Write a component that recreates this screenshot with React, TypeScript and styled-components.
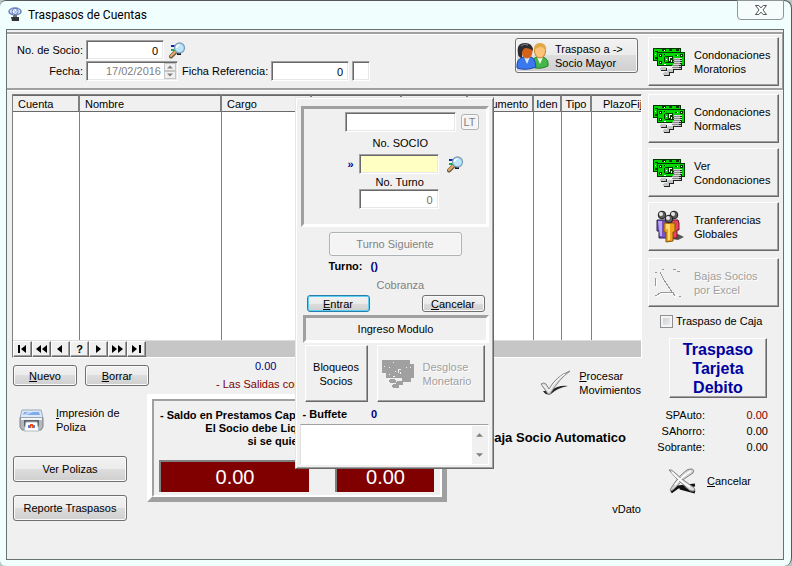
import React from "react";
import styled, { createGlobalStyle, css } from "styled-components";

const Global = createGlobalStyle`
  *, *::before, *::after { box-sizing: border-box; }
  body { margin: 0; background: #b9c4c6; }
  body, button, input, textarea { font: 11px/14px "Liberation Sans", Arial, sans-serif; color: #000; }
  button, input, textarea { margin: 0; padding: 0; border-radius: 0; outline: none; }
  p { margin: 0; }
  svg { display: block; flex: none; }
`;

const raised = css`
  border: 1px solid;
  border-color: #fff #696969 #696969 #fff;
  box-shadow: inset -1px -1px 0 #a0a0a0;
`;
const sunken = css`
  border: 1px solid;
  border-color: #a0a0a0 #fff #fff #a0a0a0;
  box-shadow: inset 1px 1px 0 #696969, inset -1px -1px 0 #e8e8e8;
`;

const Window = styled.main`
  position: relative;
  display: flex;
  flex-direction: column;
  min-height: 100vh;
  padding: 0 7px 6px 6px;
  background: #f1fefe;
  border-top: 1px solid #55595a;
  border-right: 1px solid #55595a;
  border-radius: 6px 8px 8px 6px;
`;
const TitleBar = styled.header`
  display: flex;
  align-items: flex-start;
  height: 28px;
  padding: 5px 0 0 2px;
  gap: 6px;
`;
const Title = styled.h1`
  flex: 1;
  margin: 0;
  font: 12px/18px Roboto, "Segoe UI", sans-serif;
`;
const CloseButton = styled.button`
  display: grid;
  place-items: center;
  width: 47px;
  height: 20px;
  margin-top: -6px;
  border: 1px solid #8d9696;
  border-radius: 0 0 4px 4px;
  background: #f6fbfb;
`;
const Client = styled.div`
  flex: 1;
  padding-top: 2px;
  border: 1px solid #68716f;
  background: #f0f0f0;
`;
const Band = styled.section`
  display: flex;
  align-items: flex-start;
  gap: 10px;
  padding: 3px 3px 2px 0;
  border-top: 2px solid #a0a0a0;
  border-bottom: 2px solid #a0a0a0;
  border-right: 1px solid #a0a0a0;
  box-shadow: inset 0 1px 0 #fff, 0 1px 0 #fff;
`;
const Fields = styled.div`
  flex: 1;
  display: grid;
  gap: 1px;
  padding-top: 3px;
`;
const FieldRow = styled.div`
  display: flex;
  align-items: center;
  gap: 3px;
`;
const Label = styled.label<{ $width?: number; $indent?: number }>`
  width: ${(p) => (p.$width ? `${p.$width}px` : "auto")};
  margin-left: ${(p) => p.$indent ?? 0}px;
  text-align: right;
  white-space: nowrap;
`;
const TextInput = styled.input<{ $width: number; $tone?: string; $bg?: string }>`
  ${sunken}
  width: ${(p) => p.$width}px;
  height: 20px;
  padding: 1px 5px 0;
  text-align: right;
  color: ${(p) => p.$tone ?? "#000"};
  background: ${(p) => p.$bg ?? "#fff"};
`;
const DateBox = styled.div`
  ${sunken}
  display: flex;
  align-items: center;
  width: 92px;
  height: 20px;
  padding: 2px 1px;
  background: #fff;
`;
const DateInput = styled.input`
  flex: 1;
  min-width: 0;
  padding-right: 3px;
  border: 0;
  text-align: right;
  color: #808080;
  background: transparent;
`;
const Spinner = styled.div`
  display: grid;
  width: 12px;
`;
const SpinButton = styled.button`
  display: grid;
  place-items: center;
  height: 8px;
  border: 1px solid #c4c4c4;
  background: #f0f0f0;
`;
const IconButton = styled.button`
  display: flex;
  align-items: center;
  border: 0;
  background: none;
  text-align: left;
`;
const SearchButton = styled(IconButton)<{ $indent?: number }>`
  margin-left: ${(p) => p.$indent ?? 2}px;
`;
const AeroButton = styled.button<{ $width?: number; $height: number; $focus?: boolean }>`
  display: flex;
  align-items: center;
  justify-content: center;
  width: ${(p) => (p.$width ? `${p.$width}px` : "100%")};
  height: ${(p) => p.$height}px;
  border: 1px solid ${(p) => (p.$focus ? "#2c7ca8" : "#707070")};
  border-radius: 3px;
  box-shadow: inset 0 0 0 1px ${(p) => (p.$focus ? "#5cd0f4" : "#fafafa")};
  background: linear-gradient(#f2f2f2, #ebebeb 50%, #dddddd 50%, #cfcfcf);
  &:disabled {
    color: #838383;
    border-color: #adb2b5;
    background: #f4f4f4;
  }
`;
const MajorButton = styled(AeroButton)`
  justify-content: flex-start;
  gap: 6px;
  margin-top: 1px;
  text-align: left;
`;
const BevelButton = styled.button<{ $width?: number; $height: number; $center?: boolean; $pad?: number }>`
  ${raised}
  display: flex;
  flex: none;
  align-items: center;
  justify-content: ${(p) => (p.$center ? "center" : "flex-start")};
  gap: 9px;
  width: ${(p) => p.$width ?? 131}px;
  height: ${(p) => p.$height}px;
  padding: 0 ${(p) => p.$pad ?? 4}px;
  text-align: ${(p) => (p.$center ? "center" : "left")};
  background: #f0f0f0;
  &:disabled { color: #a0a0a0; text-shadow: 1px 1px 0 #fff; }
`;
const Body = styled.div`
  display: flex;
  gap: 6px;
  padding: 4px 4px 0 5px;
`;
const MainColumn = styled.div`
  flex: 1;
  min-width: 0;
`;
const Side = styled.aside`
  display: flex;
  flex-direction: column;
  flex: none;
  gap: 5px;
  width: 131px;
`;
const Browse = styled.section`
  border: 1px solid;
  border-color: #808080 #fff #fff #808080;
  background: #c6c6c6;
`;
const Table = styled.table`
  width: 100%;
  table-layout: fixed;
  border-collapse: separate;
  border-spacing: 0;
  background: #fff;
`;
const Column = styled.col<{ $width?: number }>`
  width: ${(p) => (p.$width ? `${p.$width}px` : "auto")};
`;
const HeadCell = styled.th<{ $center?: boolean; $last?: boolean }>`
  height: 17px;
  padding: 0 0 0 ${(p) => (p.$last ? 11 : p.$center ? 0 : 5)}px;
  overflow: hidden;
  white-space: nowrap;
  font-weight: normal;
  text-align: ${(p) => (p.$center ? "center" : "left")};
  background: #f0f0f0;
  border: 1px solid;
  border-width: 1px ${(p) => (p.$last ? 0 : 2)}px 1px 0;
  border-color: #696969 #808080 #696969 #fff;
`;
const Cell = styled.td<{ $last?: boolean }>`
  height: 228px;
  padding: 0;
  border-right: ${(p) => (p.$last ? 0 : 1)}px solid #808080;
`;
const Navigator = styled.nav`
  display: flex;
  height: 17px;
  border-top: 1px solid #dcdcdc;
`;
const NavButton = styled.button`
  ${raised}
  display: grid;
  place-items: center;
  width: 19px;
  height: 16px;
  background: #f0f0f0;
  font-weight: bold;
  line-height: 12px;
`;
const Lower = styled.div`
  display: flex;
  justify-content: space-between;
`;
const LowerLeft = styled.div`
  flex: 1;
  min-width: 0;
`;
const ActionRow = styled.div`
  display: flex;
  height: 36px;
  padding: 7px 0 0 1px;
  gap: 8px;
`;
const Notes = styled.div`
  padding-left: 59px;
  margin-top: -8px;
  line-height: 18px;
  white-space: nowrap;
  color: #800000;
`;
const Amount = styled.output<{ $color?: string; $indent?: number }>`
  display: block;
  padding-left: ${(p) => p.$indent ?? 0}px;
  color: ${(p) => p.$color ?? "#000"};
`;
const SummaryRow = styled.div`
  display: flex;
  gap: 20px;
`;
const Reports = styled.div`
  display: grid;
  align-content: start;
  gap: 13px;
  width: 115px;
  padding: 12px 0 0 1px;
`;
const PrintButton = styled(IconButton)`
  gap: 12px;
  height: 28px;
  margin-bottom: 9px;
  padding-left: 6px;
  white-space: nowrap;
`;
const Balance = styled.section`
  width: 300px;
  height: 108px;
  border: 5px solid;
  border-color: #fff #a0a0a0 #a0a0a0 #fff;
`;
const BalanceInner = styled.div`
  height: 100%;
  padding: 8px 5px 0 5px;
  border: 2px solid;
  border-color: #a0a0a0 #fff #fff #a0a0a0;
  text-align: center;
  font-weight: bold;
  line-height: 13px;
  white-space: nowrap;
`;
const Totals = styled.div`
  display: flex;
  justify-content: space-between;
  padding: 12px 1px 0 0;
`;
const Total = styled.output<{ $width: number }>`
  width: ${(p) => p.$width}px;
  height: 32px;
  border-top: 2px solid #808080;
  border-left: 2px solid #808080;
  background: #800000;
  color: #fff;
  font-size: 20px;
  font-weight: normal;
  line-height: 30px;
`;
const LowerRight = styled.div`
  display: flex;
  flex-direction: column;
  flex: none;
  align-items: flex-end;
  width: 160px;
  padding: 10px 1px 0 0;
`;
const ProcessButton = styled(IconButton)`
  gap: 8px;
  height: 30px;
`;
const AutoTitle = styled.h2`
  margin: 32px 15px 0 0;
  font-size: 13px;
  line-height: 16px;
  white-space: nowrap;
`;
const DataNote = styled.p`
  margin-top: 56px;
`;
const Check = styled.label`
  display: flex;
  align-items: center;
  gap: 3px;
  padding: 2px 0 0 12px;
  white-space: nowrap;
`;
const CheckInput = styled.input`
  appearance: none;
  width: 13px;
  height: 13px;
  border: 1px solid #8e8f8f;
  box-shadow: inset 0 0 0 2px #f4f4f4;
  background: linear-gradient(135deg, #c4cad2, #f2f2f2);
`;
const SideGap = styled.div<{ $top: number; $left?: number }>`
  padding: ${(p) => p.$top}px 0 0 ${(p) => p.$left ?? 0}px;
`;
const DebitButton = styled(BevelButton)`
  color: #0000a0;
  font-size: 16px;
  font-weight: bold;
  line-height: 19px;
`;
const Sums = styled.dl`
  display: grid;
  grid-template-columns: 57px 1fr;
  margin: 4px 11px 0 0;
  line-height: 16px;
  text-align: right;
  white-space: nowrap;
`;
const SumValue = styled.dd<{ $color?: string }>`
  margin: 0;
  color: ${(p) => p.$color ?? "#000"};
`;
const CancelButton = styled(IconButton)`
  gap: 10px;
  margin: 8px 0 0 20px;
`;

const Dialog = styled.section`
  position: absolute;
  top: 96px;
  left: calc(50% - 101px);
  width: 199px;
  padding: 8px 4px 3px 4px;
  border: 1px solid;
  border-color: #e6e6e6 #696969 #696969 #e6e6e6;
  box-shadow: inset 1px 1px 0 #fff, inset -1px -1px 0 #a0a0a0;
  background: #f0f0f0;
`;
const Group = styled.div`
  display: grid;
  grid-template-rows: 20px 22px 20px 15px 20px;
  align-content: start;
  align-items: center;
  height: 121px;
  margin-left: 1px;
  padding: 3px 6px 0 0;
  border: 3px solid;
  border-color: #a0a0a0 #fff #fff #a0a0a0;
`;
const GroupRow = styled.div<{ $indent: number; $gap?: number }>`
  display: flex;
  align-items: center;
  gap: ${(p) => p.$gap ?? 0}px;
  padding-left: ${(p) => p.$indent}px;
`;
const Marker = styled.span`
  width: 8px;
  color: #0000a0;
  font-weight: bold;
`;
const DialogButtons = styled.div`
  display: flex;
  justify-content: space-between;
  padding: 3px 4px 0 7px;
`;
const TurnArea = styled.div`
  display: grid;
  padding: 5px 0 0 29px;
`;
const TurnLine = styled.p`
  display: flex;
  gap: 8px;
  margin-top: 3px;
  font-weight: bold;
`;
const Blue = styled.span`
  color: #000080;
`;
const Muted = styled.p`
  margin-top: 5px;
  padding-left: 48px;
  color: #808080;
`;
const ModuleTitle = styled.h2`
  height: 28px;
  margin: 3px 0 2px 3px;
  border: 3px solid;
  border-color: #a0a0a0 #fff #fff #a0a0a0;
  text-align: center;
  font-size: 11px;
  font-weight: normal;
  line-height: 22px;
`;
const ModuleButtons = styled.div`
  display: flex;
  justify-content: space-between;
  padding: 0 4px 0 5px;
`;
const Buffet = styled.p`
  display: flex;
  gap: 24px;
  padding: 5px 0 3px 3px;
  font-weight: bold;
`;
const MemoBox = styled.div`
  display: flex;
  height: 41px;
  border: 1px solid;
  border-color: #a0a0a0 #fff #fff #e0e0e0;
  background: #fff;
`;
const Memo = styled.textarea`
  flex: 1;
  min-width: 0;
  border: 0;
  resize: none;
  overflow: hidden;
`;
const ScrollTrack = styled.div`
  display: flex;
  flex-direction: column;
  justify-content: space-between;
  width: 16px;
  margin-top: 1px;
  background: #f0f0f0;
`;
const ScrollButton = styled.button`
  display: grid;
  place-items: center;
  height: 18px;
  border: 0;
  background: none;
`;

const Arrow = ({ up, size = 7, color = "#808080" }: { up?: boolean; size?: number; color?: string }) => (
  <svg width={size} height="4" viewBox="0 0 8 4" aria-hidden="true">
    <path d={up ? "M0 4 4 0l4 4z" : "M0 0h8L4 4z"} fill={color} />
  </svg>
);

const AppIcon = () => (
  <svg width="14" height="16" viewBox="0 0 14 16" aria-hidden="true">
    <ellipse cx="7" cy="5.500" rx="6" ry="3.500" fill="#dbe6fa" stroke="#6580bd" strokeWidth="1.500" />
    <circle cx="7" cy="5.500" r="3" fill="#fff" stroke="#5672b8" />
    <path d="M4 2 10 9M11 2 5 9" stroke="#91a8dc" />
    <path d="M3 11h8v4H4z" fill="#303438" />
    <path d="M5 9h4v2H5z" fill="#71777d" />
  </svg>
);

const CloseIcon = () => (
  <svg width="12" height="10" viewBox="0 0 12 10" aria-hidden="true">
    <path d="M.5.5h3.300L6 2.900 8.200.5h3.300L8 5l3.500 4.500H8.200L6 7.100 3.800 9.500H.5L4 5z" fill="#fff" stroke="#4d5359" />
  </svg>
);

const SearchIcon = () => (
  <svg width="17" height="17" viewBox="0 0 17 17" aria-hidden="true">
    <path d="M2 3h4v2H2z" fill="#0828c0" />
    <path d="M2 7h4v2H2z" fill="#16ad48" />
    <path d="M8 11h4v2H8z" fill="#151515" />
    <path d="m2 14.500 4-4" stroke="#6c5840" strokeWidth="4" strokeLinecap="round" />
    <path d="m2 14 4-4" stroke="#dfa868" strokeWidth="2.400" strokeLinecap="round" />
    <circle cx="10.500" cy="6" r="5" fill="#bce5fa" stroke="#7d9fb8" strokeWidth="1.300" />
    <path d="M7.500 6q0-3 3-3" fill="none" stroke="#fff" strokeWidth="1.600" />
  </svg>
);

const MoneyIcon = ({ off }: { off?: boolean }) => {
  const green = off ? "#a0a0a0" : "#00d800";
  const dark = off ? "#a0a0a0" : "#003800";
  const coin = off ? "#a0a0a0" : "#c4c4c4";
  const pale = off ? "#f0f0f0" : "#fff";
  return (
    <svg width="32" height="28" viewBox="0 0 32 28" shapeRendering="crispEdges" aria-hidden="true">
      <path d="M0 0h28v13H0z" fill={dark} />
      <path d="M1 1h26v11H1z" fill={green} />
      <path d="M2 3h3v1H2zM2 9h2v2H2zM9 1h4v2H9zM16 1h3v2h-3zM23 1h3v2h-3z" fill={dark} />
      <path d="M2 6h1v1H2zM11 2h1v1h-1z" fill={pale} />
      <path d="M4 4h28v14H4z" fill={dark} />
      <path d="M5 5h26v12H5z" fill={green} />
      <path d="M6 6h3v3H6zM6 13h3v3H6zM27 6h3v3h-3zM11 6h1v1h-1zM12 8h3v1h-3zM11 9h1v5h-1zM12 14h3v1h-3zM15 8h5v7h-5zM22 7h2v1h-2zM23 10h2v1h-2z" fill={dark} />
      <path d="M7 7h1v1H7zM7 14h1v1H7zM28 7h1v1h-1zM16 9h3v1h-3zM16 10h1v3h-1zM18 12h1v2h-1zM13 11h1v1h-1zM24 7h1v1h-1zM11 16h2v1h-2z" fill={pale} />
      <path d="M20 11h9v11h-9z" fill={off ? coin : "#222"} />
      {[10, 12, 14, 16, 18, 20].map((y) => (
        <path key={y} d={`M${y < 15 ? 21 : 20} ${y}h8v1h-8z`} fill={off ? coin : "#d4d4d4"} />
      ))}
      {off ? null : <path d="M20 11h7v1h-7zM20 13h7v1h-7zM20 15h7v1h-7zM19 17h7v1h-7zM19 19h7v1h-7z" fill="#8a8a8a" />}
      {[[7, 20], [14, 22], [10, 25]].map(([x, y]) => (
        <g key={x}>
          <path d={`M${x + 1} ${y}h6v3h-6z`} fill={off ? coin : "#222"} />
          <path d={`M${x} ${y}h6v2h-6zM${x + 1} ${y - 1}h5v1h-5z`} fill={coin} />
        </g>
      ))}
    </svg>
  );
};

const CoupleIcon = () => (
  <svg width="33" height="28" viewBox="0 0 33 28" aria-hidden="true">
    <path d="M16 25q-1-9 5-10l3 2 3-2q6 2 5 9-8 4-16 1z" fill="#45b64a" stroke="#26832b" />
    <path d="m21 15 3 7 3-7z" fill="#f5fff2" />
    <ellipse cx="24" cy="9" rx="5.500" ry="7" fill="#ffc477" stroke="#bd812d" />
    <path d="M18 9q-1-8 6-8 7 0 6 8-2-4-6-4-4 1-6 4z" fill="#e2a94b" />
    <path d="M1 26q-1-9 6-11l4 2 4-2q4 1 5 10-10 4-19 1z" fill="#3979ed" stroke="#1b4aae" />
    <path d="m8 15 3 7 3-7z" fill="#d9eaff" />
    <ellipse cx="11" cy="10" rx="5.500" ry="6.500" fill="#d4621a" />
    <path d="M2 12Q0 1 9 1q8 0 8 8-3-3-8-3-2 1-3 4v6q-4-1-4-4z" fill="#2e2c30" />
    <path d="M5 4q3-3 7-1" stroke="#858287" fill="none" />
  </svg>
);

const PeopleIcon = () => (
  <svg width="29" height="33" viewBox="0 0 29 33" aria-hidden="true">
    <path d="M17 29 23 24l6 3-6 3z" fill="#555" />
    <path d="M2 10h10v18H4V21H2z" fill="#7652c5" stroke="#29204e" />
    <path d="M3 11h4v15H5z" fill="#b8a7ee" />
    <path d="M16 10h7l1 3v7h-2v8h-6z" fill="#f04362" stroke="#6b1525" />
    <path d="M9 13h11v9h-2v9l-7 1V22H9z" fill="#f3a21c" stroke="#80520d" />
    <path d="M11 14h4v16h-2V19h-2z" fill="#ffda72" />
    {[[7, 5], [19, 5], [14, 9]].map(([x, y]) => (
      <g key={x}>
        <circle cx={x} cy={y} r="3.800" fill="#5e5e5e" stroke="#1f1f1f" />
        <circle cx={x - 1} cy={y - 1} r="2" fill="#e6e6e6" />
      </g>
    ))}
  </svg>
);

const SketchIcon = () => (
  <svg width="28" height="30" viewBox="0 0 28 30" shapeRendering="crispEdges" aria-hidden="true">
    <path d="M6 6l4 8 6 9 5 7M1 29l7-4h10l8 4M1 11v8" fill="none" stroke="#fff" />
    <path d="M0 4h2M7 1h2M18 1h3M22 3h3M0 10v8M5 4l4 8 6 9 5 7M0 28l7-4h10l2 1M24 28h2" fill="none" stroke="#999" />
  </svg>
);

const PrinterIcon = () => (
  <svg width="25" height="23" viewBox="0 0 25 23" aria-hidden="true">
    <path d="M3 1h19l2 8H1z" fill="#dce9fb" stroke="#98a8bd" />
    <path d="M5 3h15l1 3H4z" fill="#7fabea" />
    <path d="M4 6 9 3h5L8 6z" fill="#b9d3f8" />
    <path d="M1 9h23v9l-2 3H3l-2-3z" fill="#b4b8bd" stroke="#7c838b" />
    <path d="M2 9h21v2H2z" fill="#f1f3f5" />
    <path d="M5 11h15v7H5z" fill="#5a606a" />
    <path d="M7 13h11l2 9H5z" fill="#fff" stroke="#b2b8c0" />
    <path d="M9 16h2v3H9zM14 16h2v3h-2z" fill="#5a78d6" />
    <path d="M11 15h3v4h-3z" fill="#ed4d24" />
    <path d="M12 17h1v2h-1z" fill="#ffd34d" />
  </svg>
);

const CheckIcon = () => (
  <svg width="31" height="26" viewBox="0 0 31 26" aria-hidden="true">
    <path d="M3 21q3 5 8 3 6-6 17-8-10-1-18 5z" fill="#222" />
    <path d="M1 14q3-2 5 0l3 5Q16 6 30 1 19 9 10 24H8z" fill="#dedede" stroke="#858585" />
    <path d="M3 15q3 2 6 6Q17 8 25 4" fill="none" stroke="#fff" />
  </svg>
);

const CrossIcon = () => (
  <svg width="29" height="26" viewBox="0 0 29 26" aria-hidden="true">
    <path d="M3 24 10 19l17-2M12 20l15 4" fill="none" stroke="#111" strokeWidth="3" />
    <path d="M23 1q4 0 2 4Q15 10 6 21q-3 3-4 1Q10 8 19 2q2-1 4-1z" fill="#d2d2d2" stroke="#808080" />
    <path d="M1 2q2-1 5 2 7 7 19 15 3 2 1 4-4 1-7-3Q10 13 1 2z" fill="#dcdcdc" stroke="#808080" />
    <path d="M4 4q8 9 18 15M23 3Q14 8 7 17" fill="none" stroke="#fff" strokeWidth="1.500" />
  </svg>
);

const navShapes: { name: string; d?: string }[] = [
  { name: "Primero", d: "M1 1h2v8H1zM9 1v8L4 5z" },
  { name: "Página anterior", d: "M5 1v8L0 5zM11 1v8L6 5z" },
  { name: "Anterior", d: "M7 1v8L2 5z" },
  { name: "Buscar" },
  { name: "Siguiente", d: "M3 1v8l5-4z" },
  { name: "Página siguiente", d: "M0 1v8l5-4zM6 1v8l5-4z" },
  { name: "Último", d: "M1 1v8l5-4zM8 1h2v8H8z" },
];

const columns: { title: string; width?: number; center?: boolean }[] = [
  { title: "Cuenta", width: 67 },
  { title: "Nombre" },
  { title: "Cargo", width: 90 },
  { title: "Abono", width: 90 },
  { title: "Saldo", width: 66 },
  { title: "Documento", width: 66, center: true },
  { title: "Iden", width: 28, center: true },
  { title: "Tipo", width: 30, center: true },
  { title: "PlazoFijo", width: 49 },
];

const sideActions = [
  { lines: ["Condonaciones", "Normales"], icon: <MoneyIcon /> },
  { lines: ["Ver", "Condonaciones"], icon: <MoneyIcon /> },
  { lines: ["Tranferencias", "Globales"], icon: <PeopleIcon /> },
];

const IconSlot = styled.span`
  display: grid;
  place-items: center;
  width: 32px;
`;

const TwoLines = ({ lines }: { lines: string[] }) => (
  <span>
    {lines[0]}
    <br />
    {lines[1]}
  </span>
);

const EntryDialog = () => (
  <Dialog role="dialog" aria-label="Ingreso Modulo">
    <Group>
      <GroupRow $indent={41} $gap={5}>
        <TextInput $width={111} aria-label="Nombre del socio" />
        <AeroButton $width={18} $height={16} disabled>LT</AeroButton>
      </GroupRow>
      <GroupRow $indent={69}>
        <label htmlFor="socio">No. SOCIO</label>
      </GroupRow>
      <GroupRow $indent={44} $gap={3}>
        <Marker>»</Marker>
        <TextInput id="socio" $width={80} $bg="#ffffc4" />
        <SearchButton $indent={5} aria-label="Buscar socio"><SearchIcon /></SearchButton>
      </GroupRow>
      <GroupRow $indent={72}>
        <label htmlFor="turno">No. Turno</label>
      </GroupRow>
      <GroupRow $indent={55}>
        <TextInput id="turno" $width={80} $tone="#707070" defaultValue="0" />
      </GroupRow>
    </Group>
    <TurnArea>
      <AeroButton $width={133} $height={24} disabled>Turno Siguiente</AeroButton>
      <TurnLine>Turno: <Blue>()</Blue></TurnLine>
      <Muted>Cobranza</Muted>
    </TurnArea>
    <DialogButtons>
      <AeroButton $width={63} $height={17} $focus><u>E</u>ntrar</AeroButton>
      <AeroButton $width={63} $height={17}><u>C</u>ancelar</AeroButton>
    </DialogButtons>
    <ModuleTitle>Ingreso Modulo</ModuleTitle>
    <ModuleButtons>
      <BevelButton $width={63} $height={57} $center><TwoLines lines={["Bloqueos", "Socios"]} /></BevelButton>
      <BevelButton $width={108} $height={57} disabled>
        <MoneyIcon off />
        <TwoLines lines={["Desglose", "Monetario"]} />
      </BevelButton>
    </ModuleButtons>
    <Buffet>- Buffete <Blue>0</Blue></Buffet>
    <MemoBox>
      <Memo aria-label="Buffete" />
      <ScrollTrack>
        <ScrollButton aria-label="Subir"><Arrow up /></ScrollButton>
        <ScrollButton aria-label="Bajar"><Arrow /></ScrollButton>
      </ScrollTrack>
    </MemoBox>
  </Dialog>
);

export default function App() {
  return (
    <>
      <Global />
      <Window>
        <TitleBar>
          <AppIcon />
          <Title>Traspasos de Cuentas</Title>
          <CloseButton aria-label="Cerrar"><CloseIcon /></CloseButton>
        </TitleBar>
        <Client>
          <Band>
            <Fields>
              <FieldRow>
                <Label $width={76} htmlFor="noSocio">No. de Socio:</Label>
                <TextInput id="noSocio" $width={78} defaultValue="0" />
                <SearchButton aria-label="Buscar"><SearchIcon /></SearchButton>
              </FieldRow>
              <FieldRow>
                <Label $width={76} htmlFor="fecha">Fecha:</Label>
                <DateBox>
                  <DateInput id="fecha" defaultValue="17/02/2016" disabled />
                  <Spinner>
                    <SpinButton aria-label="Aumentar" disabled><Arrow up size={6} /></SpinButton>
                    <SpinButton aria-label="Disminuir" disabled><Arrow size={6} /></SpinButton>
                  </Spinner>
                </DateBox>
                <Label $indent={1} htmlFor="ficha">Ficha Referencia:</Label>
                <TextInput id="ficha" $width={78} defaultValue="0" />
                <TextInput $width={18} aria-label="Serie" />
              </FieldRow>
            </Fields>
            <MajorButton $width={123} $height={35}>
              <CoupleIcon />
              <TwoLines lines={["Traspaso a ->", "Socio Mayor"]} />
            </MajorButton>
            <BevelButton $height={49}>
              <IconSlot><MoneyIcon /></IconSlot>
              <TwoLines lines={["Condonaciones", "Moratorios"]} />
            </BevelButton>
          </Band>
          <Body>
            <MainColumn>
              <Browse>
                <Table>
                  <colgroup>
                    {columns.map((c) => <Column key={c.title} $width={c.width} />)}
                  </colgroup>
                  <thead>
                    <tr>
                      {columns.map((c, i) => (
                        <HeadCell key={c.title} scope="col" $center={c.center} $last={i === columns.length - 1}>
                          {c.title}
                        </HeadCell>
                      ))}
                    </tr>
                  </thead>
                  <tbody>
                    <tr>
                      {columns.map((c, i) => <Cell key={c.title} $last={i === columns.length - 1} />)}
                    </tr>
                  </tbody>
                </Table>
                <Navigator aria-label="Registros">
                  {navShapes.map((n) => (
                    <NavButton key={n.name} aria-label={n.name}>
                      {n.d ? (
                        <svg width="11" height="10" viewBox="0 0 11 10" aria-hidden="true"><path d={n.d} /></svg>
                      ) : "?"}
                    </NavButton>
                  ))}
                </Navigator>
              </Browse>
              <Lower>
                <LowerLeft>
                  <ActionRow>
                    <AeroButton $width={64} $height={21}><u>N</u>uevo</AeroButton>
                    <AeroButton $width={64} $height={21}><u>B</u>orrar</AeroButton>
                    <Notes>
                      <Amount $color="#000080" $indent={39}>0.00</Amount>
                      - Las Salidas con
                    </Notes>
                  </ActionRow>
                  <SummaryRow>
                    <Reports>
                      <PrintButton>
                        <PrinterIcon />
                        <span><u>I</u>mpresión de<br />Poliza</span>
                      </PrintButton>
                      <AeroButton $height={26}>Ver Polizas</AeroButton>
                      <AeroButton $height={26}>Reporte Traspasos</AeroButton>
                    </Reports>
                    <Balance>
                      <BalanceInner>
                        <p>- Saldo en Prestamos Capital + Intereses Pendientes</p>
                        <p>El Socio debe Liquidar sus Deudas</p>
                        <p>si se quiere Retirar</p>
                        <Totals>
                          <Total $width={150}>0.00</Total>
                          <Total $width={99}>0.00</Total>
                        </Totals>
                      </BalanceInner>
                    </Balance>
                  </SummaryRow>
                </LowerLeft>
                <LowerRight>
                  <ProcessButton>
                    <CheckIcon />
                    <span><u>P</u>rocesar<br />Movimientos</span>
                  </ProcessButton>
                  <AutoTitle>Caja Socio Automatico</AutoTitle>
                  <DataNote>vDato</DataNote>
                </LowerRight>
              </Lower>
            </MainColumn>
            <Side>
              {sideActions.map((a) => (
                <BevelButton key={a.lines.join()} $height={49}>
                  <IconSlot>{a.icon}</IconSlot>
                  <TwoLines lines={a.lines} />
                </BevelButton>
              ))}
              <SideGap $top={2}>
                <BevelButton $height={49} disabled>
                  <IconSlot><SketchIcon /></IconSlot>
                  <TwoLines lines={["Bajas Socios", "por Excel"]} />
                </BevelButton>
              </SideGap>
              <Check>
                <CheckInput type="checkbox" />
                Traspaso de Caja
              </Check>
              <SideGap $top={5} $left={21}>
                <DebitButton $width={98} $height={60} $center>
                  <span>Traspaso<br />Tarjeta<br />Debito</span>
                </DebitButton>
              </SideGap>
              <Sums>
                <dt>SPAuto:</dt>
                <SumValue $color="#800000">0.00</SumValue>
                <dt>SAhorro:</dt>
                <SumValue>0.00</SumValue>
                <dt>Sobrante:</dt>
                <SumValue>0.00</SumValue>
              </Sums>
              <CancelButton>
                <CrossIcon />
                <span><u>C</u>ancelar</span>
              </CancelButton>
            </Side>
          </Body>
        </Client>
        <EntryDialog />
      </Window>
    </>
  );
}
